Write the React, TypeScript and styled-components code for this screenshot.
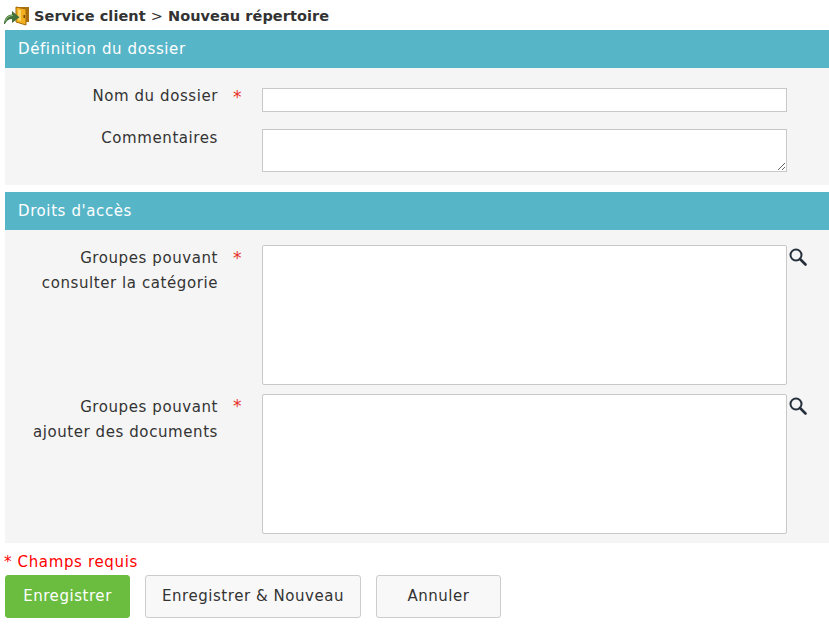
import styled, { createGlobalStyle, css } from 'styled-components';

const GlobalStyle = createGlobalStyle`
  html, body {
    margin: 0;
    padding: 0;
    background: #fff;
    font-family: "DejaVu Sans", Verdana, sans-serif;
    color: #333;
  }
`;

const Page = styled.div`
  width: 829px;
  height: 624px;
  overflow: hidden;
  padding-left: 5px;
  box-sizing: border-box;
`;

const Breadcrumb = styled.div`
  display: flex;
  align-items: center;
  height: 30px;
  margin-left: -1px;
  padding-top: 2px;
  box-sizing: border-box;
  font-size: 14.5px;
  letter-spacing: 0.05px;
  font-weight: bold;
  color: #333;
  gap: 5px;
  white-space: pre;
`;

const Separator = styled.span`
  font-weight: normal;
`;

const SectionHeader = styled.div`
  height: 38px;
  line-height: 38px;
  padding-left: 13px;
  background: #57b5c8;
  color: #fff;
  font-size: 15px;
  letter-spacing: 0.6px;
`;

const Panel = styled.div<{ $last?: boolean }>`
  background: #f5f5f5;
  padding: ${({ $last }) => ($last ? '15px 0 9px' : '20px 0 13px')};
  margin-bottom: ${({ $last }) => ($last ? '0' : '7px')};
`;

const FormRow = styled.div<{ $gap?: number }>`
  display: flex;
  align-items: flex-start;
  margin-bottom: ${({ $gap }) => $gap ?? 0}px;
`;

const Label = styled.label<{ $top: number }>`
  width: 213px;
  text-align: right;
  font-size: 15px;
  letter-spacing: 0.58px;
  line-height: 25px;
  color: #333;
  flex-shrink: 0;
  margin-top: ${({ $top }) => $top}px;
`;

const Star = styled.span<{ $top: number }>`
  width: 44px;
  flex-shrink: 0;
  box-sizing: border-box;
  padding-left: 15px;
  margin-top: ${({ $top }) => $top}px;
  font-size: 17px;
  line-height: 25px;
  color: #e8302a;
`;

const fieldBase = css`
  width: 525px;
  box-sizing: border-box;
  border: 1px solid #c8c8c8;
  background: #fff;
  margin: 0;
  padding: 2px;
  display: block;
  outline: none;
`;

const TextInput = styled.input`
  ${fieldBase}
  height: 24px;
`;

const TextArea = styled.textarea`
  ${fieldBase}
  height: 43px;
`;

const ListBox = styled.select`
  ${fieldBase}
  height: 140px;
`;

const SearchIcon = styled.svg`
  flex-shrink: 0;
  margin-left: 2px;
  margin-top: 3px;
`;

const Required = styled.div`
  margin-top: 9px;
  margin-left: -1px;
  height: 23px;
  line-height: 20px;
  font-size: 15px;
  letter-spacing: 0.65px;
  color: #f00;
`;

const Actions = styled.div`
  display: flex;
  gap: 15px;
`;

const Button = styled.button<{ $primary?: boolean; $width: number }>`
  width: ${({ $width }) => $width}px;
  height: 43px;
  box-sizing: border-box;
  border-radius: 3px;
  font-family: inherit;
  font-size: 15px;
  letter-spacing: 0.55px;
  padding: 0 0 2px;
  border: 1px solid ${({ $primary }) => ($primary ? '#6abd3f' : '#ccc')};
  background: ${({ $primary }) => ($primary ? '#6abd3f' : '#f8f8f8')};
  color: ${({ $primary }) => ($primary ? '#fff' : '#333')};
`;

const FolderLogo = () => (
  <svg width="25" height="20" viewBox="0 0 25 20">
    <path d="M12 1h13v15h-4v-1h-9z" fill="#a9700f" />
    <path d="M12 1l10 2v16l-10-3z" fill="#f2b01f" stroke="#a5690c" strokeWidth="1" />
    <path d="M14 3.500l3 .6v11l-3-.8z" fill="#fbd56a" />
    <rect x="19.500" y="9" width="1.400" height="3" fill="#6e4206" />
    <path d="M0 18c.2-5.500 3.500-9.500 8-9.500V5l7.500 6.200L8 17v-4c-3.200 0-5.500 1.800-7 5z" fill="#44703a" />
    <path d="M1.500 15c1-3.500 3.500-5.500 7.500-5.500" stroke="#8fc47a" strokeWidth="1" fill="none" />
  </svg>
);

const Magnifier = () => (
  <SearchIcon width="18" height="18" viewBox="0 0 18 18">
    <circle cx="7" cy="7" r="5.500" fill="none" stroke="#26303a" strokeWidth="2" />
    <path d="M11 11l5.500 5.500" stroke="#26303a" strokeWidth="2.600" strokeLinecap="round" />
  </SearchIcon>
);

export default function App() {
  return (
    <Page>
      <GlobalStyle />
      <Breadcrumb>
        <FolderLogo />
        <span>
          Service client <Separator>&gt;</Separator> Nouveau répertoire
        </span>
      </Breadcrumb>

      <SectionHeader>Définition du dossier</SectionHeader>
      <Panel>
        <FormRow $gap={17}>
          <Label $top={-4}>Nom du dossier</Label>
          <Star $top={-3}>*</Star>
          <TextInput type="text" />
        </FormRow>
        <FormRow>
          <Label $top={-3}>Commentaires</Label>
          <Star $top={0} />
          <TextArea />
        </FormRow>
      </Panel>

      <SectionHeader>Droits d'accès</SectionHeader>
      <Panel $last>
        <FormRow $gap={9}>
          <Label $top={1}>
            Groupes pouvant
            <br />
            consulter la catégorie
          </Label>
          <Star $top={1}>*</Star>
          <ListBox multiple />
          <Magnifier />
        </FormRow>
        <FormRow>
          <Label $top={1}>
            Groupes pouvant
            <br />
            ajouter des documents
          </Label>
          <Star $top={0}>*</Star>
          <ListBox multiple />
          <Magnifier />
        </FormRow>
      </Panel>

      <Required>* Champs requis</Required>
      <Actions>
        <Button $primary $width={125}>Enregistrer</Button>
        <Button $width={216}>Enregistrer &amp; Nouveau</Button>
        <Button $width={125}>Annuler</Button>
      </Actions>
    </Page>
  );
}
